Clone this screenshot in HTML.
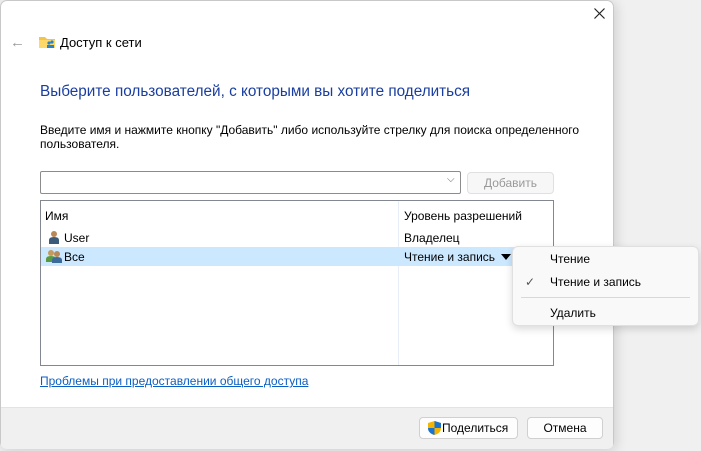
<!DOCTYPE html>
<html><head><meta charset="utf-8"><style>
body{margin:0;width:701px;height:451px;background:#f0f0f0;font-family:"Segoe UI","Liberation Sans",sans-serif;font-size:12px;color:#000;position:relative;overflow:hidden}
.a{position:absolute;white-space:nowrap}
.win{position:absolute;left:0;top:0;width:614px;height:449px;background:#fff;border-radius:7px;box-shadow:inset 0 0 0 1px #c8c8c8,2px 2px 12px rgba(0,0,0,.15);overflow:hidden}
.foot{position:absolute;left:1px;top:407px;width:612px;height:41px;background:#f0f0f0;border-top:1px solid #e3e3e3}
.btn{position:absolute;background:#fdfdfd;border:1px solid #d0d0d0;border-radius:4px;text-align:center;line-height:20px;font-size:12px}
</style></head><body>
<div class="win">
<svg class="a" style="left:594px;top:8px" width="11" height="11"><path d="M0.5 0.5L10.5 10.5M10.5 0.5L0.5 10.5" stroke="#222" stroke-width="1.2"/></svg>
<div class="a" style="left:10px;top:34px;font-size:15px;color:#999">←</div>
<svg class="a" style="left:38px;top:35px" width="18" height="14"><path d="M1 2h6l2 2h8v9H1z" fill="#f3c34c"/><path d="M1 5h16v8H1z" fill="#ffd86a"/><circle cx="11" cy="8" r="1.6" fill="#2a83c6"/><circle cx="14" cy="7" r="1.6" fill="#2a83c6"/><rect x="9" y="10" width="7" height="3" fill="#2a83c6"/></svg>
<div class="a" style="left:60px;top:35px;font-size:13px">Доступ к сети</div>
<div class="a" style="left:40px;top:83px;font-size:15.3px;color:#1a3ea0">Выберите пользователей, с которыми вы хотите поделиться</div>
<div class="a" style="left:40px;top:123px">Введите имя и нажмите кнопку "Добавить" либо используйте стрелку для поиска определенного</div>
<div class="a" style="left:40px;top:137px">пользователя.</div>
<div class="a" style="left:40px;top:171px;width:419px;height:21px;border:1px solid #8c8c8c;border-radius:2px"></div>
<div class="a" style="left:447px;top:174px;color:#666;font-size:10px">⌵</div>
<div class="btn" style="left:467px;top:172px;width:85px;color:#999;border-color:#e0e0e0;background:#f7f7f7">Добавить</div>
<div class="a" style="left:40px;top:200px;width:512px;height:164px;border:1px solid #828790"></div>
<div class="a" style="left:398px;top:201px;width:1px;height:164px;background:#e8eef8"></div>
<div class="a" style="left:45px;top:209px">Имя</div>
<div class="a" style="left:404px;top:209px">Уровень разрешений</div>
<svg class="a" style="left:48px;top:230px" width="12" height="14"><circle cx="6" cy="4" r="3" fill="#b88858"/><path d="M1 14v-4q0-3 5-3t5 3v4z" fill="#3c5a7a"/></svg>
<div class="a" style="left:64px;top:231px">User</div>
<div class="a" style="left:404px;top:231px">Владелец</div>
<div class="a" style="left:41px;top:247px;width:511px;height:19px;background:#cce8ff"></div>
<svg class="a" style="left:46px;top:249px" width="16" height="14"><circle cx="5" cy="4" r="3" fill="#c59a5f"/><path d="M0 13v-3q0-3 5-3t5 3v3z" fill="#5a9a3c"/><circle cx="11" cy="5" r="3" fill="#b88858"/><path d="M6 14v-3q0-3 5-3t5 3v3z" fill="#3c6a9a"/></svg>
<div class="a" style="left:64px;top:250px">Все</div>
<div class="a" style="left:404px;top:250px">Чтение и запись</div>
<div class="a" style="left:501px;top:254px;width:0;height:0;border-left:5px solid transparent;border-right:5px solid transparent;border-top:6px solid #000"></div>
<div class="a" style="left:40px;top:374px;color:#0b5fc4;text-decoration:underline">Проблемы при предоставлении общего доступа</div>
<div class="foot"></div>
<div class="btn" style="left:419px;top:417px;width:97px">&nbsp;&nbsp;&nbsp;&nbsp;Поделиться</div>
<svg class="a" style="left:428px;top:421px" width="13" height="14"><path d="M6.5 0L13 2v5q0 5-6.5 7Q0 12 0 7V2z" fill="#f4b400"/><path d="M6.5 0L13 2v5H6.5zM6.5 7V14Q0 12 0 7z" fill="#1a73d0"/></svg>
<div class="btn" style="left:527px;top:417px;width:74px">Отмена</div>
</div>
<div class="a" style="left:512px;top:246px;width:185px;height:78px;background:#f9f9f9;border:1px solid #e0e0e0;border-radius:6px;box-shadow:0 3px 8px rgba(0,0,0,.15)"></div>
<div class="a" style="left:550px;top:252px">Чтение</div>
<div class="a" style="left:525px;top:275px;color:#555">✓</div>
<div class="a" style="left:550px;top:275px">Чтение и запись</div>
<div class="a" style="left:521px;top:297px;width:169px;height:1px;background:#d8d8d8"></div>
<div class="a" style="left:550px;top:306px">Удалить</div>
</body></html>
